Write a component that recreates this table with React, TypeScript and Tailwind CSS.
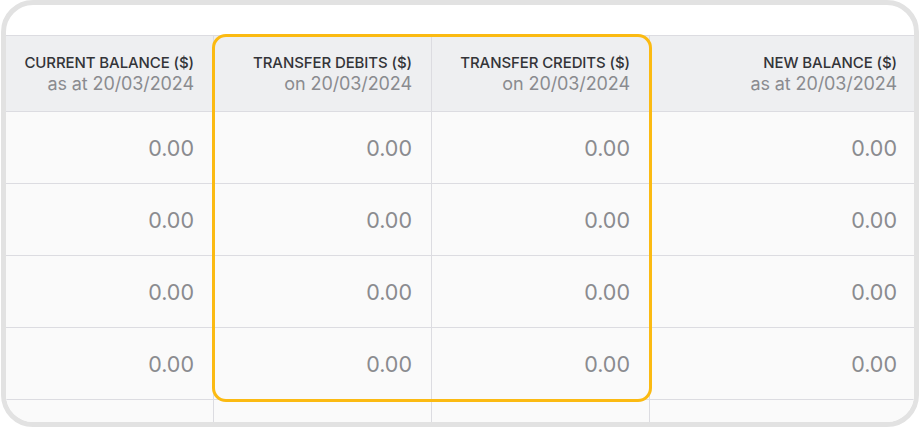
import React from "react";

const cols = [
  { title: "CURRENT BALANCE ($)", sub: "as at 20/03/2024" },
  { title: "TRANSFER DEBITS ($)", sub: "on 20/03/2024" },
  { title: "TRANSFER CREDITS ($)", sub: "on 20/03/2024" },
  { title: "NEW BALANCE ($)", sub: "as at 20/03/2024" },
];

const cellBase = "flex flex-col items-end justify-center";
const colCls = [
  "pr-[19px]",
  "border-l border-[#dcdce1] pr-[19px]",
  "border-l border-[#dcdce1] pr-[19px]",
  "border-l border-[#dcdce1] pr-[17px]",
];

export default function App() {
  return (
    <div
      className="relative w-[921px] h-[432px] bg-white overflow-hidden"
      style={{ fontFamily: "Inter, 'Noto Sans', sans-serif" }}
    >
      <div className="ml-[1px] w-[918px] h-[427px] border-[5px] border-[#e2e2e2] rounded-[32px] overflow-hidden bg-white">
        <div className="h-[30px]" />
        <div className="grid grid-cols-[207px_218px_218px_1fr] h-[76px] bg-[#eeeff1] border-t border-[#dcdce1]">
          {cols.map((c, i) => (
            <div key={i} className={`${cellBase} ${colCls[i]}`}>
              <div className="text-[15px] leading-[20px] font-medium text-[#333438] tracking-[-0.1px]">
                {c.title}
              </div>
              <div className="text-[18px] leading-[22px] text-[#8a8b8f] tracking-[-0.1px]">{c.sub}</div>
            </div>
          ))}
        </div>
        {[0, 1, 2, 3].map((r) => (
          <div
            key={r}
            className="grid grid-cols-[207px_218px_218px_1fr] h-[72px] bg-[#fafafa] border-t border-[#dcdce1]"
          >
            {cols.map((_, i) => (
              <div key={i} className={`${cellBase} ${colCls[i]}`}>
                <div className="text-[21.5px] leading-[26px] text-[#8a8b8f]">0.00</div>
              </div>
            ))}
          </div>
        ))}
        <div className="grid grid-cols-[207px_218px_218px_1fr] h-[40px] bg-[#fafafa] border-t border-[#dcdce1]">
          {cols.map((_, i) => (
            <div key={i} className={colCls[i]} />
          ))}
        </div>
      </div>
      <div className="absolute left-[212px] top-[34px] w-[440px] h-[368px] border-[3px] border-[#fbba12] rounded-[14px] pointer-events-none" />
    </div>
  );
}
